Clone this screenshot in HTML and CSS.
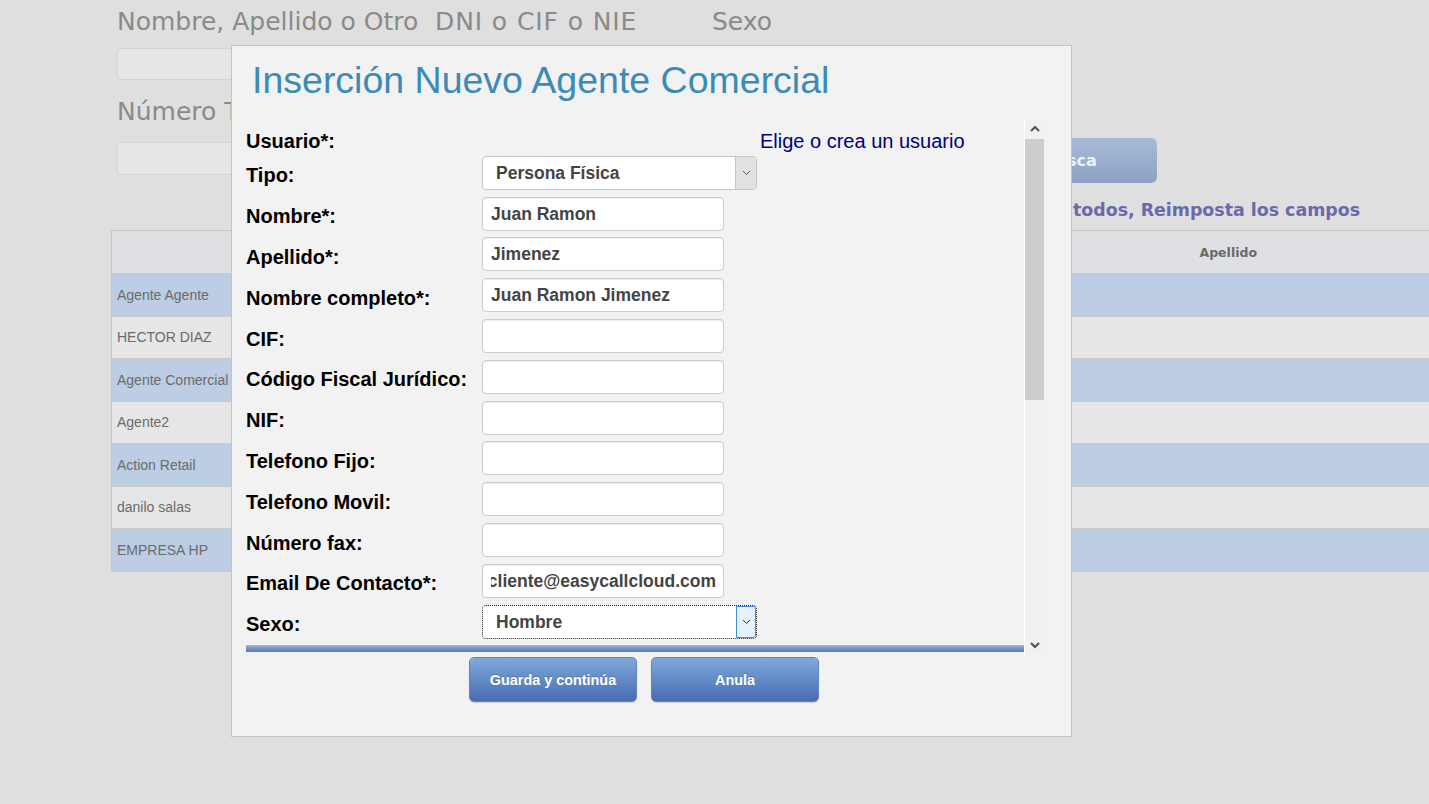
FILE: index.html
```html
<!DOCTYPE html>
<html lang="es">
<head>
<meta charset="utf-8">
<title>Agentes Comerciales</title>
<link rel="stylesheet" href="styles.css">
</head>
<body>
<div class="page">
  <div class="search">
    <div class="labels">
      <span class="lab w1">Nombre, Apellido o Otro</span>
      <span class="lab w2">DNI o CIF o NIE</span>
      <span class="lab">Sexo</span>
    </div>
    <div class="bginput"></div>
    <div class="labels labels2">
      <span class="lab">Número Telefono</span>
    </div>
    <div class="row2">
      <div class="bginput"></div>
      <button class="busca" type="button">Busca</button>
    </div>
  </div>
  <div class="links">Muestra todos, Reimposta los campos</div>
  <table class="grid">
    <colgroup><col class="c1"><col class="c2"><col class="c3"><col class="c4"></colgroup>
    <thead>
      <tr><th></th><th></th><th></th><th>Apellido</th></tr>
    </thead>
    <tbody>
      <tr class="blue"><td>Agente Agente</td><td></td><td></td><td></td></tr>
      <tr class="grey"><td>HECTOR DIAZ</td><td></td><td></td><td></td></tr>
      <tr class="blue"><td>Agente Comercial</td><td></td><td></td><td></td></tr>
      <tr class="grey"><td>Agente2</td><td></td><td></td><td></td></tr>
      <tr class="blue"><td>Action Retail</td><td></td><td></td><td></td></tr>
      <tr class="grey"><td>danilo salas</td><td></td><td></td><td></td></tr>
      <tr class="blue"><td>EMPRESA HP</td><td></td><td></td><td></td></tr>
    </tbody>
  </table>
</div>

<div class="modal">
  <h1 class="title">Inserción Nuevo Agente Comercial</h1>
  <div class="scrollwrap">
    <div class="scrollcontent">
      <form class="form">
        <div class="row row-user">
          <label>Usuario*:</label>
          <span></span>
          <a class="pick">Elige o crea un usuario</a>
        </div>
        <div class="row">
          <label>Tipo:</label>
          <div class="select">
            <select class="sel"><option>Persona Física</option></select>
            <span class="arr"><svg width="9" height="6" viewBox="0 0 9 6"><polyline points="1,1 4.5,4.5 8,1" fill="none" stroke="#555" stroke-width="1"/></svg></span>
          </div>
        </div>
        <div class="row"><label>Nombre*:</label><input class="inp" type="text" value="Juan Ramon"></div>
        <div class="row"><label>Apellido*:</label><input class="inp" type="text" value="Jimenez"></div>
        <div class="row"><label>Nombre completo*:</label><input class="inp" type="text" value="Juan Ramon Jimenez"></div>
        <div class="row"><label>CIF:</label><input class="inp" type="text" value=""></div>
        <div class="row"><label>Código Fiscal Jurídico:</label><input class="inp" type="text" value=""></div>
        <div class="row"><label>NIF:</label><input class="inp" type="text" value=""></div>
        <div class="row"><label>Telefono Fijo:</label><input class="inp" type="text" value=""></div>
        <div class="row"><label>Telefono Movil:</label><input class="inp" type="text" value=""></div>
        <div class="row"><label>Número fax:</label><input class="inp" type="text" value=""></div>
        <div class="row"><label>Email De Contacto*:</label><input class="inp inp-end" type="text" value="cliente@easycallcloud.com"></div>
        <div class="row">
          <label>Sexo:</label>
          <div class="select focus">
            <select class="sel"><option>Hombre</option></select>
            <span class="arr"><svg width="9" height="6" viewBox="0 0 9 6"><polyline points="1,1 4.5,4.5 8,1" fill="none" stroke="#333" stroke-width="1"/></svg></span>
          </div>
        </div>
      </form>
      <div class="bar"></div>
    </div>
    <div class="scrollbar">
      <div class="sb-btn"><svg width="10" height="7" viewBox="0 0 10 7"><polyline points="1,6 5,2 9,6" fill="none" stroke="#505050" stroke-width="2"/></svg></div>
      <div class="sb-thumb"></div>
      <div class="sb-track"></div>
      <div class="sb-btn"><svg width="10" height="7" viewBox="0 0 10 7"><polyline points="1,1 5,5 9,1" fill="none" stroke="#505050" stroke-width="2"/></svg></div>
    </div>
  </div>
  <div class="actions">
    <button class="btn" type="button">Guarda y continúa</button>
    <button class="btn" type="button">Anula</button>
  </div>
</div>
</body>
</html>
```
FILE: styles.css
```css
html, body {
  margin: 0;
  padding: 0;
}
body {
  background: #dfdfdf;
  width: 1429px;
  height: 804px;
  overflow: hidden;
  position: relative;
  font-family: "Liberation Sans", Arial, sans-serif;
}

/* ---------- background page ---------- */
.search {
  padding-left: 117px;
}
.labels {
  display: flex;
  margin-top: 4px;
  height: 36px;
  line-height: 36px;
  font-family: "DejaVu Sans", sans-serif;
  font-size: 25px;
  color: #8a8a8a;
}
.labels2 {
  margin-top: 14px;
}
.lab {
  white-space: nowrap;
}
.w1 { width: 318px; }
.w2 { width: 277px; letter-spacing: 0.9px; }
.bginput {
  width: 280px;
  height: 32px;
  margin-top: 8px;
  box-sizing: border-box;
  border: 1px solid #d4d4d4;
  border-radius: 4px;
  background: #e6e6e6;
}
.row2 {
  display: flex;
  align-items: flex-start;
  width: 1040px;
  margin-top: 12px;
}
.row2 .bginput {
  margin-top: 0;
  height: 33px;
}
.busca {
  margin-left: auto;
  margin-top: -4px;
  width: 174px;
  height: 45px;
  border: none;
  border-radius: 6px;
  background: linear-gradient(#a6bbd6, #8da1c4);
  color: #eef1f6;
  font-family: "DejaVu Sans", sans-serif;
  font-weight: bold;
  font-size: 16px;
  padding: 0;
}
.links {
  margin-top: 16px;
  height: 22px;
  line-height: 22px;
  padding-right: 69px;
  text-align: right;
  font-family: "DejaVu Sans", sans-serif;
  font-weight: bold;
  font-size: 17.4px;
  color: #6a69ab;
}
.grid {
  margin-top: 9px;
  margin-left: 111px;
  width: 1320px;
  table-layout: fixed;
  border-collapse: collapse;
  border: 1px solid #c8c8c8;
}
.c1 { width: 300px; }
.c2 { width: 300px; }
.c3 { width: 314px; }
.c4 { width: 406px; }
.grid th {
  height: 42px;
  padding: 0;
  background: #dfe0e3;
  border-bottom: 1px solid #c8c8c8;
  font-family: "DejaVu Sans", sans-serif;
  font-weight: bold;
  font-size: 12.5px;
  color: #6a6a6a;
  text-align: center;
}
.grid td {
  height: 41.5px;
  padding: 0 0 0 5px;
  border-bottom: 1px solid #c8c8c8;
  font-size: 14px;
  color: #6b6b6b;
  white-space: nowrap;
  overflow: hidden;
}
.grid tr.blue td { background: #bdcde3; }
.grid tr.grey td { background: #e6e6e6; }

/* ---------- modal ---------- */
.modal {
  position: absolute;
  left: 231px;
  top: 45px;
  width: 841px;
  height: 692px;
  box-sizing: border-box;
  border: 1px solid #c3c3c3;
  background: #f2f2f2;
  padding: 13px 27px 0 13px;
}
.title {
  margin: 0;
  padding-left: 7px;
  font-family: "Liberation Sans", Arial, sans-serif;
  font-weight: normal;
  font-size: 37.5px;
  line-height: 42px;
  color: #3b8bb6;
  white-space: nowrap;
}
.scrollwrap {
  display: flex;
  margin-top: 17px;
  height: 538px;
}
.scrollcontent {
  flex: 1;
  overflow: hidden;
  padding-top: 12px;
  padding-left: 1px;
}
.row {
  display: grid;
  grid-template-columns: 236px 278px 1fr;
  align-items: center;
  height: 34px;
  margin-bottom: 6.8px;
}
.row label {
  font-weight: bold;
  font-size: 20px;
  line-height: 23px;
  padding-top: 6px;
  color: #000;
  white-space: nowrap;
}
.row-user {
  height: 22px;
  margin-bottom: 3.9px;
}
.row-user label {
  padding-top: 0;
  line-height: 22px;
}
.pick {
  font-size: 20px;
  line-height: 22px;
  color: #000080;
  white-space: nowrap;
}
.inp {
  width: 242px;
  height: 34px;
  box-sizing: border-box;
  margin: 0;
  border: 1px solid #cccccc;
  border-radius: 4px;
  padding: 1px 7px 0 8px;
  background: #fff;
  box-shadow: inset 0 1px 1px rgba(0, 0, 0, 0.075);
  font-family: "Liberation Sans", Arial, sans-serif;
  font-weight: bold;
  font-size: 17.5px;
  color: #444;
  outline: none;
}
.inp-end {
  direction: rtl;
}
.select {
  display: flex;
  width: 275px;
  height: 34px;
  box-sizing: border-box;
  border: 1px solid #c5c5c5;
  border-radius: 4px;
  background: #fff;
  overflow: hidden;
}
.sel {
  flex: 1;
  min-width: 0;
  -webkit-appearance: none;
  appearance: none;
  border: none;
  background: transparent;
  margin: 0;
  padding: 0 0 0 13px;
  height: 32px;
  font-family: "Liberation Sans", Arial, sans-serif;
  font-weight: bold;
  font-size: 17.5px;
  color: #444;
  outline: none;
}
.arr {
  width: 20px;
  display: flex;
  align-items: center;
  justify-content: center;
  border-left: 1px solid #c5c5c5;
  background: #e1e1e1;
}
.select.focus {
  border: 1px dotted #222;
}
.select.focus .arr {
  box-sizing: border-box;
  border: 1px solid #3a8ee0;
  border-radius: 0 3px 3px 0;
  background: #e5f1fb;
}
.bar {
  height: 7px;
  background: linear-gradient(#a4bbe0, #7694cb 45%, #5a7bc0);
}
.scrollbar {
  width: 20px;
  box-sizing: border-box;
  border-left: 1px solid #ffffff;
  background: #f1f1f1;
  display: flex;
  flex-direction: column;
}
.sb-btn {
  height: 21px;
  display: flex;
  align-items: center;
  justify-content: center;
}
.sb-thumb {
  height: 261px;
  background: #cdcdcd;
}
.sb-track {
  flex: 1;
}
.actions {
  display: flex;
  justify-content: center;
  gap: 14px;
  margin-top: 1px;
  padding-right: 1px;
}
.btn {
  width: 168px;
  height: 45px;
  border: 1px solid #5f83bd;
  border-radius: 5px;
  background: linear-gradient(#7eaad8, #4a6bb3);
  box-shadow: 0 1px 1px rgba(0, 0, 0, 0.15);
  color: #fff;
  font-family: "Liberation Sans", Arial, sans-serif;
  font-weight: bold;
  font-size: 14.4px;
  text-shadow: 0 -1px 0 rgba(0, 0, 0, 0.2);
  padding: 0;
}
```
